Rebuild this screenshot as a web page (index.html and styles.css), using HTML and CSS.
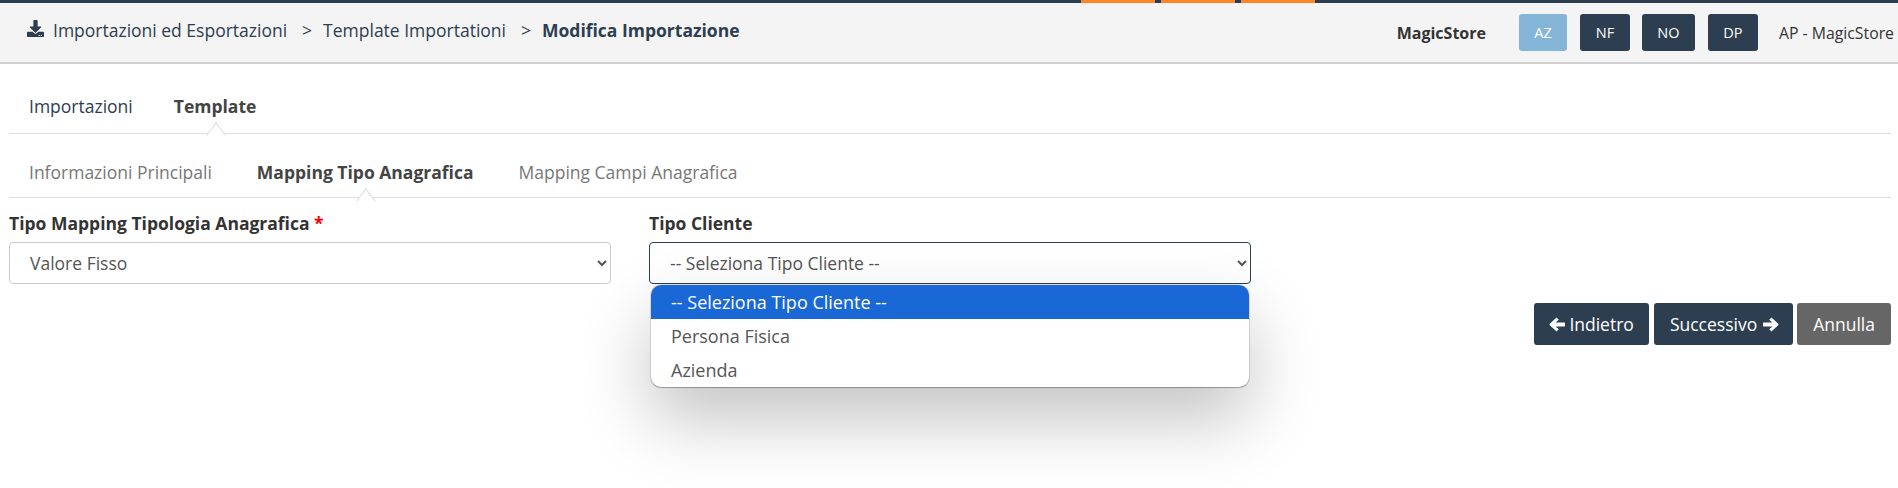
FILE: index.html
```html
<!DOCTYPE html>
<html lang="it">
<head>
<meta charset="utf-8">
<title>Modifica Importazione</title>
<link rel="stylesheet" href="styles.css">
</head>
<body>
<div class="topbar">
  <span class="tick"></span><span class="tick"></span><span class="tick"></span>
</div>
<header class="header">
  <nav class="crumbs">
    <svg class="crumb-icon" viewBox="0 0 512 512"><path d="M216 0h80c13.3 0 24 10.7 24 24v168h87.7c17.8 0 26.7 21.5 14.1 34.1L269.7 378.3c-7.5 7.5-19.8 7.5-27.3 0L90.1 226.1c-12.6-12.6-3.7-34.1 14.1-34.1H192V24c0-13.3 10.7-24 24-24zm296 376v112c0 13.3-10.7 24-24 24H24c-13.3 0-24-10.7-24-24V376c0-13.3 10.7-24 24-24h146.7l49 49c20.1 20.1 52.5 20.1 72.6 0l49-49H488c13.3 0 24 10.7 24 24zm-124 88c0-11-9-20-20-20s-20 9-20 20 9 20 20 20 20-9 20-20zm64 0c0-11-9-20-20-20s-20 9-20 20 9 20 20 20 20-9 20-20z"/></svg>
    <span class="crumb">Importazioni ed Esportazioni</span>
    <span class="sep">&gt;</span>
    <span class="crumb">Template Importationi</span>
    <span class="sep">&gt;</span>
    <strong class="crumb-current">Modifica Importazione</strong>
  </nav>
  <div class="user">
    <strong class="store">MagicStore</strong>
    <span class="badge badge-light">AZ</span>
    <span class="badge badge-nf">NF</span>
    <span class="badge badge-no">NO</span>
    <span class="badge badge-dp">DP</span>
    <span class="account">AP - MagicStore</span>
  </div>
</header>
<main class="main">
  <ul class="tabs tabs-main">
    <li class="tab">Importazioni</li>
    <li class="tab active">Template</li>
  </ul>
  <ul class="tabs tabs-sub">
    <li class="tab muted">Informazioni Principali</li>
    <li class="tab active">Mapping Tipo Anagrafica</li>
    <li class="tab muted">Mapping Campi Anagrafica</li>
  </ul>
  <form class="form">
    <div class="field">
      <label class="label" for="tipo-mapping">Tipo Mapping Tipologia Anagrafica <span class="req">*</span></label>
      <select class="select" id="tipo-mapping"><option>Valore Fisso</option></select>
    </div>
    <div class="field">
      <label class="label" for="tipo-cliente">Tipo Cliente</label>
      <select class="select select-open" id="tipo-cliente"><option>-- Seleziona Tipo Cliente --</option></select>
      <ul class="popup">
        <li class="option selected">-- Seleziona Tipo Cliente --</li>
        <li class="option">Persona Fisica</li>
        <li class="option">Azienda</li>
      </ul>
    </div>
  </form>
  <div class="actions">
    <button class="btn btn-dark btn-back" type="button"><svg class="btn-icon" viewBox="0 0 16 15"><path d="M7.5.5 9.8 2.8 6.6 5.5H15.2Q16 5.5 16 6.3V8.7Q16 9.5 15.2 9.5H6.6L9.8 12.2 7.5 14.5.8 8.3Q0 7.5.8 6.7Z"/></svg> Indietro</button>
    <button class="btn btn-dark btn-next" type="button">Successivo <svg class="btn-icon" viewBox="0 0 16 15"><path d="M8.5.5 6.2 2.8 9.4 5.5H.8Q0 5.5 0 6.3V8.7Q0 9.5.8 9.5H9.4L6.2 12.2 8.5 14.5 15.2 8.3Q16 7.5 15.2 6.7Z"/></svg></button>
    <button class="btn btn-grey" type="button">Annulla</button>
  </div>
</main>
</body>
</html>
```
FILE: styles.css
```css
* { box-sizing: border-box; }
html, body { margin: 0; padding: 0; }
body {
  width: 1898px;
  height: 488px;
  overflow: hidden;
  background: #fff;
  font-family: "Open Sans", sans-serif;
  font-size: 17.5px;
  color: #2c3e50;
}
.topbar {
  height: 3px;
  background: #2c3e50;
  display: flex;
  gap: 6px;
  padding-left: 1081px;
}
.tick { width: 74px; background: #ff8329; }
.header {
  height: 61px;
  background: #f4f4f4;
  border-bottom: 2px solid #d0d0d0;
  display: flex;
  align-items: flex-start;
  justify-content: space-between;
}
.crumbs {
  display: flex;
  align-items: center;
  height: 22px;
  margin-top: 16px;
  padding-left: 27px;
}
.crumb-icon { width: 17px; height: 17px; fill: #2c3e50; margin-right: 9px; margin-top: -4px; }
.sep { margin: 0 11px 0 15px; }
.crumb-current { font-weight: 700; }
.user {
  display: flex;
  align-items: center;
  height: 37px;
  margin-top: 11px;
  padding-right: 4px;
  color: #333;
}
.store { font-size: 16px; font-weight: 700; margin-right: 33px; }
.badge {
  height: 37px;
  border-radius: 3px;
  background: #2c3e50;
  color: #fff;
  font-size: 14.5px;
  display: flex;
  align-items: center;
  justify-content: center;
}
.badge-light { width: 48px; background: #85b5d6; margin-right: 13px; }
.badge-nf { width: 50px; margin-right: 12px; }
.badge-no { width: 53px; margin-right: 13px; }
.badge-dp { width: 50px; margin-right: 21px; }
.account { font-size: 15.8px; }
.main { padding: 0 7px 0 9px; }
.tabs {
  list-style: none;
  margin: 0;
  padding: 0;
  display: flex;
  align-items: center;
  border-bottom: 1px solid #ddd;
}
.tabs-main { height: 70px; padding-top: 15px; }
.tabs-sub { height: 64px; padding-top: 12px; gap: 3px; }
.tab {
  padding: 0 20px;
  position: relative;
  white-space: nowrap;
  margin-right: 2px;
  line-height: 24px;
}
.tabs-main .tab { color: #2c3e50; margin-right: 1px; }
.tab.muted { color: #777; }
.tab.active { font-weight: 700; color: #444; }
.tabs-main .tab.active { color: #444; }
.tab.active::after {
  content: "";
  position: absolute;
  left: 50%;
  width: 15px;
  height: 15px;
  margin-left: -7.5px;
  background: #fff;
  border-top: 1px solid #ddd;
  border-left: 1px solid #ddd;
  transform: rotate(45deg) skew(8deg, 8deg);
}
.tabs-main .tab.active::after { bottom: -25px; }
.tabs-sub .tab.active::after { bottom: -25px; }
.form {
  display: grid;
  grid-template-columns: 602px 602px;
  column-gap: 38px;
  padding-top: 13px;
}
.field { position: relative; }
.label {
  display: block;
  font-weight: 700;
  color: #333;
  line-height: 24px;
  margin-bottom: 7px;
}
.req { color: #f00; }
.select {
  display: block;
  width: 100%;
  height: 42px;
  padding: 0 16px;
  background: #fff;
  border: 1px solid #ccc;
  border-radius: 4px;
  font-family: inherit;
  font-size: 17.5px;
  color: #555;
}
.select-open { border-color: #2c3e50; }
.popup {
  position: absolute;
  top: 74px;
  left: 2px;
  right: 2px;
  margin: 0;
  padding: 0;
  list-style: none;
  background: #fff;
  border-radius: 10px;
  overflow: hidden;
  font-size: 18px;
  box-shadow: 0 0 0 1px rgba(0, 0, 0, 0.1), 0 1px 1px rgba(0, 0, 0, 0.25), 0 32px 70px rgba(0, 0, 0, 0.24);
}
.option { height: 34px; line-height: 34px; padding-left: 20px; color: #555; }
.option.selected { background: #1a68d6; color: #fff; }
.actions {
  display: flex;
  justify-content: flex-end;
  gap: 5px;
  margin-top: 19px;
}
.btn {
  height: 42px;
  border: 0;
  border-radius: 3px;
  padding: 0 16px;
  font-family: inherit;
  font-size: 17.5px;
  color: #fff;
  display: flex;
  align-items: center;
  gap: 4px;
}
.btn-icon { width: 16px; height: 15px; fill: #fff; }
.btn-dark { background: #2c3e50; }
.btn-back { padding: 0 15px; }
.btn-next { gap: 6px; padding-right: 14px; }
.btn-grey { background: #666; }
.btn-next + .btn-grey { margin-left: -1px; }
```
